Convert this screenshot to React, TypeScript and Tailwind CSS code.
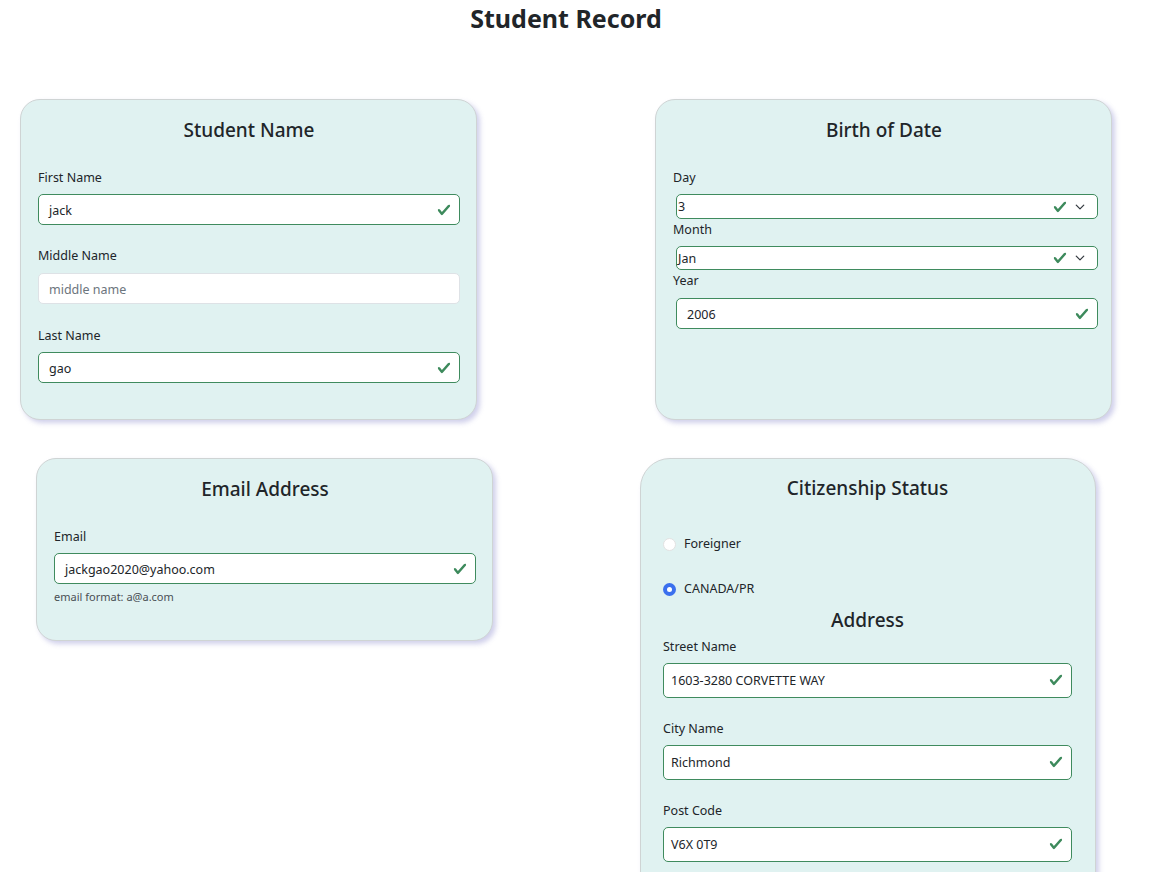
import type { ReactNode } from "react";

const Check = () => (
  <svg viewBox="0 0 8 8" className="w-[14px] h-[14px] shrink-0" fill="#3d8a5c">
    <path d="M2.3 6.73.6 4.53c-.4-1.04.46-1.4 1.1-.8l1.1 1.4 3.4-3.8c.6-.63 1.6-.27 1.2.7l-4 4.6c-.43.5-.8.4-1.1.1z" />
  </svg>
);

const Chevron = () => (
  <svg viewBox="0 0 16 16" className="w-[10px] h-[10px] shrink-0" fill="none" stroke="#343a40" strokeWidth="2" strokeLinecap="round" strokeLinejoin="round">
    <path d="m2 5 6 6 6-6" />
  </svg>
);

function Card({ className, children, title }: { className: string; children: ReactNode; title: string }) {
  return (
    <div className={`bg-[#e0f2f1] border border-[#cfd4d4] shadow-[3px_3px_5px_rgba(150,150,210,0.45)] ${className}`}>
      <h3 className="text-center text-[19px] font-medium leading-7 mb-6">{title}</h3>
      {children}
    </div>
  );
}

function Label({ children, className = "" }: { children: ReactNode; className?: string }) {
  return <div className={`text-[12.5px] leading-5 ${className}`}>{children}</div>;
}

function ValidInput({ value, className }: { value: string; className: string }) {
  return (
    <div className={`flex items-center bg-white border border-[#3f8b5e] rounded-[5px] text-[12.5px] pr-[8px] ${className}`}>
      <span className="flex-1 pt-[3px]">{value}</span>
      <Check />
    </div>
  );
}

function ValidSelect({ value, className }: { value: string; className: string }) {
  return (
    <div className={`flex items-center bg-white border border-[#3f8b5e] rounded-[5px] text-[12.5px] pl-[1px] pr-[12px] ml-[3px] w-[422px] ${className}`}>
      <span className="flex-1 pt-[2px]">{value}</span>
      <Check />
      <span className="ml-[8px]">
        <Chevron />
      </span>
    </div>
  );
}

function Radio({ checked, label, className }: { checked: boolean; label: string; className: string }) {
  return (
    <div className={`flex items-center gap-[8px] text-[12.5px] ${className}`}>
      {checked ? (
        <span className="w-[13px] h-[13px] rounded-full bg-[#3b70ee] flex items-center justify-center">
          <span className="w-[5px] h-[5px] rounded-full bg-white" />
        </span>
      ) : (
        <span className="w-[13px] h-[13px] rounded-full bg-white border border-[#e2e2e2]" />
      )}
      <span>{label}</span>
    </div>
  );
}

export default function App() {
  return (
    <div className="min-h-screen bg-white text-[#212529] font-['Noto_Sans','Open_Sans',sans-serif]">
      <h1 className="text-center text-[25px] font-bold leading-[36px] pr-10">Student Record</h1>

      <div className="grid grid-cols-2 mt-[63px]">
        {/* row 1 */}
        <Card title="Student Name" className="ml-5 w-[457px] h-[321px] rounded-[20px] pt-4 pl-[17px] pr-4">
          <Label className="mb-1.5">First Name</Label>
          <ValidInput value="jack" className="h-[31px] pl-[10px]" />
          <Label className="mt-[21px] mb-[7px]">Middle Name</Label>
          <div className="h-[31px] bg-white border border-[#dee2e6] rounded-[5px] text-[12.5px] pl-[10px] pt-[3px] flex items-center text-[#6c757d]">
            middle name
          </div>
          <Label className="mt-[22px] mb-[6px]">Last Name</Label>
          <ValidInput value="gao" className="h-[31px] pl-[10px]" />
        </Card>

        <Card title="Birth of Date" className="ml-[69px] w-[457px] h-[321px] rounded-[20px] pt-4 pl-[17px] pr-4">
          <Label className="mb-1.5">Day</Label>
          <ValidSelect value="3" className="h-[25px]" />
          <Label className="mt-px mb-1.5">Month</Label>
          <ValidSelect value="Jan" className="h-[24px]" />
          <Label className="mt-px mb-[7px]">Year</Label>
          <ValidInput value="2006" className="h-[31px] pl-[10px] ml-[3px] w-[422px]" />
        </Card>

        {/* row 2 */}
        <Card title="Email Address" className="mt-[38px] ml-9 w-[457px] h-[183px] rounded-[20px] pt-4 pl-[17px] pr-4 self-start">
          <Label className="mb-[6px]">Email</Label>
          <ValidInput value="jackgao2020@yahoo.com" className="h-[31px] pl-[10px]" />
          <div className="text-[11px] leading-4 mt-[5px] text-[#4a4f54]">email format: a@a.com</div>
        </Card>

        <Card title="Citizenship Status" className="mt-[38px] ml-[54px] w-[456px] rounded-t-[30px] pt-[15px] pl-[22px] pr-[23px] pb-10">
          <Radio checked={false} label="Foreigner" className="mt-[33px]" />
          <Radio checked label="CANADA/PR" className="mt-[26px]" />
          <h4 className="text-center text-[19px] font-medium leading-6 mt-[9px]">Address</h4>
          <Label className="mt-[5px] mb-[6px]">Street Name</Label>
          <ValidInput value="1603-3280 CORVETTE WAY" className="h-[35px] pl-[7px]" />
          <Label className="mt-[21px] mb-[6px]">City Name</Label>
          <ValidInput value="Richmond" className="h-[35px] pl-[7px]" />
          <Label className="mt-[21px] mb-[6px]">Post Code</Label>
          <ValidInput value="V6X 0T9" className="h-[35px] pl-[7px]" />
        </Card>
      </div>
    </div>
  );
}
